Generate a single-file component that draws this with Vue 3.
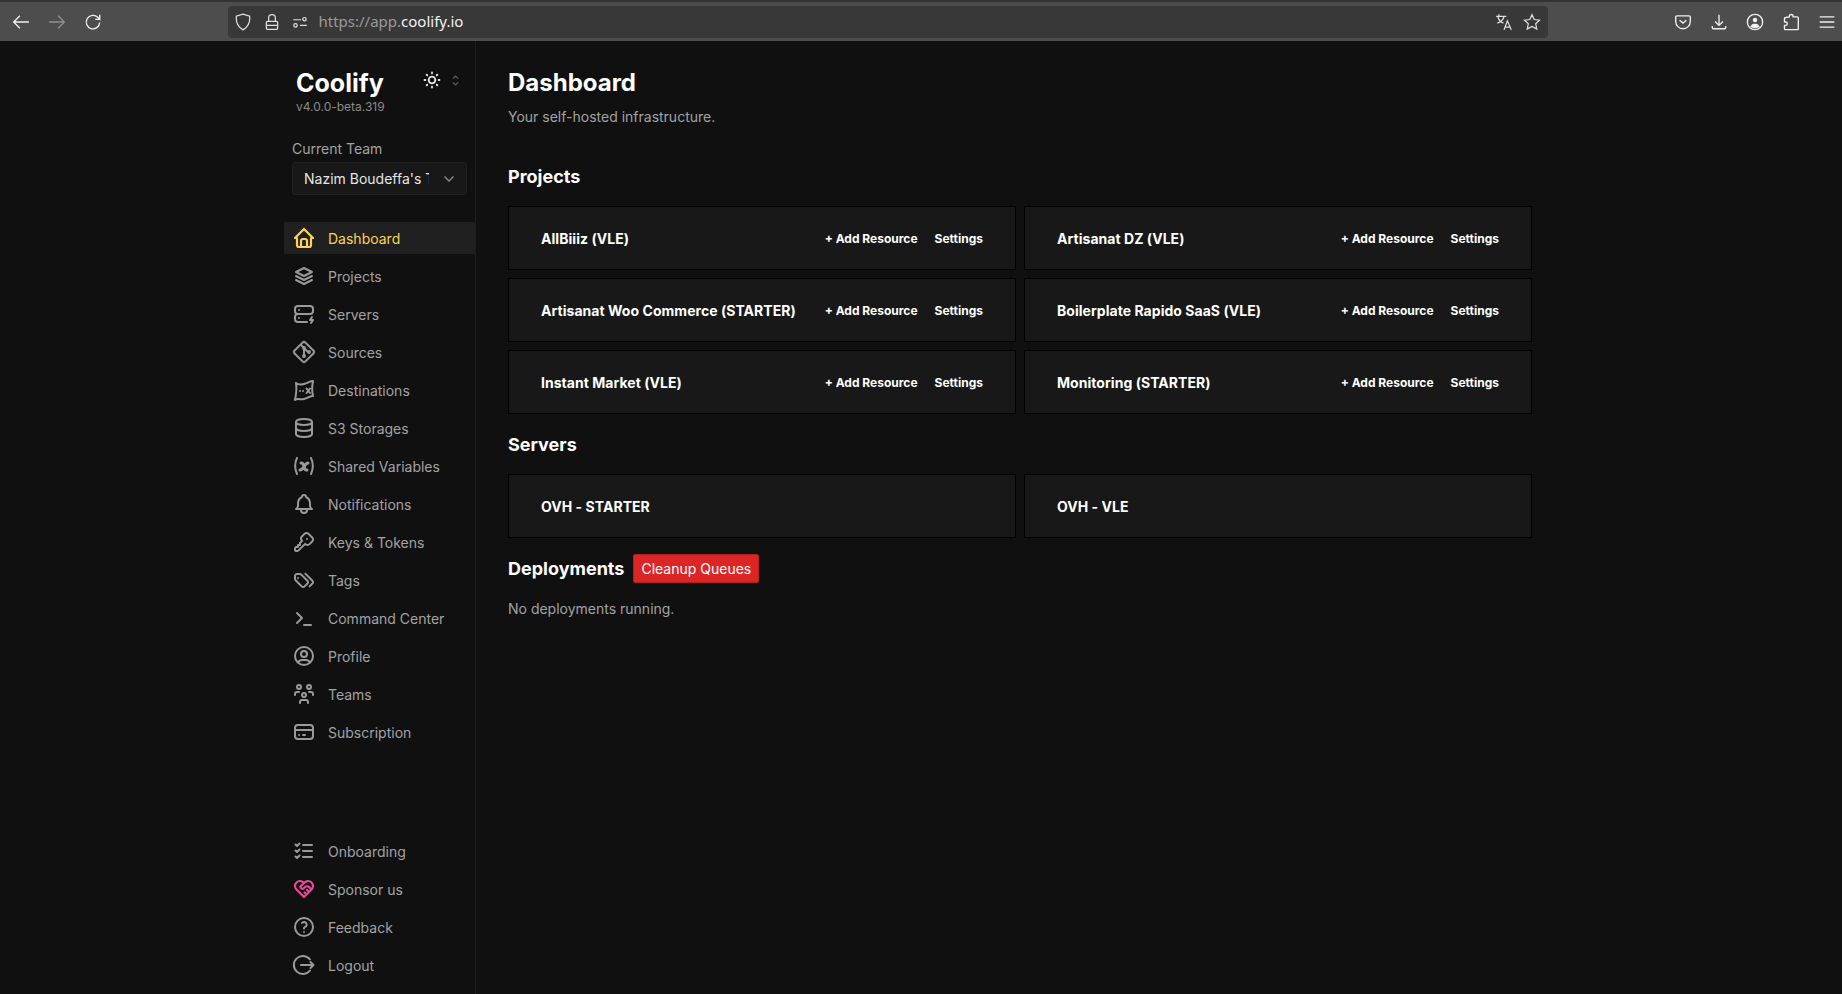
<script setup>
const topNav = [
  { label: 'Dashboard', active: true, d: 'M5 12l-2 0l9 -9l9 9l-2 0 M5 12v7a2 2 0 0 0 2 2h10a2 2 0 0 0 2 -2v-7 M9 21v-6a2 2 0 0 1 2 -2h2a2 2 0 0 1 2 2v6' },
  { label: 'Projects', d: 'M12 4l-8 4l8 4l8 -4l-8 -4 M4 12l8 4l8 -4 M4 16l8 4l8 -4' },
  { label: 'Servers', d: 'M3 7a3 3 0 0 1 3 -3h12a3 3 0 0 1 3 3v2a3 3 0 0 1 -3 3h-12a3 3 0 0 1 -3 -3z M15 20h-9a3 3 0 0 1 -3 -3v-2a3 3 0 0 1 3 -3h12 M7 8v.01 M7 16v.01 M20 15l-2 3h3l-2 3' },
  { label: 'Sources', d: 'M16 12a1 1 0 1 0 2 0a1 1 0 1 0 -2 0 M11 8a1 1 0 1 0 2 0a1 1 0 1 0 -2 0 M11 16a1 1 0 1 0 2 0a1 1 0 1 0 -2 0 M12 15v-6 M15 11l-2 -2 M11 7l-1.9 -1.9 M13.446 2.6l7.955 7.954a2.045 2.045 0 0 1 0 2.892l-7.955 7.955a2.045 2.045 0 0 1 -2.892 0l-7.955 -7.955a2.045 2.045 0 0 1 0 -2.892l7.955 -7.955a2.045 2.045 0 0 1 2.892 0z' },
  { label: 'Destinations', d: 'M4 5c2 2 4 2 8 1s6 -3 9 -3c-1 5 -1 11 0 15c-3 0 -5 2 -9 3s-6 -1 -9 1c1 -5 2 -11 1 -17z M8 13h.01 M11 13h.01 M14.500 10.500l3.500 4.500 M18 10.500l-3.500 4.500' },
  { label: 'S3 Storages', d: 'M4 6a8 3 0 1 0 16 0a8 3 0 1 0 -16 0 M4 6v6a8 3 0 0 0 16 0v-6 M4 12v6a8 3 0 0 0 16 0v-6' },
  { label: 'Shared Variables', d: 'M5 4c-2.5 5 -2.5 10 0 16m14 -16c2.5 5 2.5 10 0 16', bold: 'M9 9h1c1 0 1 1 2.016 3.527c.984 2.473 .984 3.473 1.984 3.473h1 M8 16c1.5 0 3 -2 4 -3.5s2.5 -3.5 4 -3.5' },
  { label: 'Notifications', d: 'M10 5a2 2 0 1 1 4 0a7 7 0 0 1 4 6v3a4 4 0 0 0 2 3h-16a4 4 0 0 0 2 -3v-3a7 7 0 0 1 4 -6 M9 17v1a3 3 0 0 0 6 0v-1' },
  { label: 'Keys & Tokens', d: 'M16.555 3.843l3.602 3.602a2.877 2.877 0 0 1 0 4.069l-2.643 2.643a2.877 2.877 0 0 1 -4.069 0l-.301 -.301l-6.558 6.558a2 2 0 0 1 -1.239 .578l-.175 .008h-1.172a1 1 0 0 1 -.993 -.883l-.007 -.117v-1.172a2 2 0 0 1 .467 -1.284l.119 -.13l.414 -.414h2v-2h2v-2l2.144 -2.144l-.301 -.301a2.877 2.877 0 0 1 0 -4.069l2.643 -2.643a2.877 2.877 0 0 1 4.069 0z M15 9h.01' },
  { label: 'Tags', d: 'M7.859 6h-2.834a2.025 2.025 0 0 0 -2.025 2.025v2.834c0 .537 .213 1.052 .593 1.432l6.116 6.116a2.025 2.025 0 0 0 2.864 0l2.834 -2.834a2.025 2.025 0 0 0 0 -2.864l-6.117 -6.116a2.025 2.025 0 0 0 -1.431 -.593z M17.573 18.407l2.834 -2.834a2.025 2.025 0 0 0 0 -2.864l-7.117 -7.116 M6 10h-.01' },
  { label: 'Command Center', d: 'M5 7l5 5l-5 5 M12 19l7 0' },
  { label: 'Profile', d: 'M3 12a9 9 0 1 0 18 0a9 9 0 1 0 -18 0 M9 10a3 3 0 1 0 6 0a3 3 0 1 0 -6 0 M6.168 18.849a4 4 0 0 1 3.832 -2.849h4a4 4 0 0 1 3.834 2.855' },
  { label: 'Teams', d: 'M10 13a2 2 0 1 0 4 0a2 2 0 0 0 -4 0 M8 21v-1a2 2 0 0 1 2 -2h4a2 2 0 0 1 2 2v1 M15 5a2 2 0 1 0 4 0a2 2 0 0 0 -4 0 M17 10h2a2 2 0 0 1 2 2v1 M5 5a2 2 0 1 0 4 0a2 2 0 0 0 -4 0 M3 13v-1a2 2 0 0 1 2 -2h2' },
  { label: 'Subscription', d: 'M3 8a3 3 0 0 1 3 -3h12a3 3 0 0 1 3 3v8a3 3 0 0 1 -3 3h-12a3 3 0 0 1 -3 -3z M3 10h18 M7 15h.01 M11 15h2' },
]
const bottomNav = [
  { label: 'Onboarding', d: 'M3.5 5.5l1.5 1.5l2.5 -2.5 M3.5 11.5l1.5 1.5l2.5 -2.5 M3.5 17.5l1.5 1.5l2.5 -2.5 M11 6l9 0 M11 12l9 0 M11 18l9 0' },
  { label: 'Sponsor us', pink: true, d: 'M19.5 12.572l-7.5 7.428l-7.5 -7.428a5 5 0 1 1 7.5 -6.566a5 5 0 1 1 7.5 6.572 M12 6l-3.293 3.293a1 1 0 0 0 0 1.414l.543 .543c.69 .69 1.81 .69 2.5 0l1 -1a3.182 3.182 0 0 1 4.5 0l2.25 2.25 M12.5 15.5l2 2 M15 13l2 2' },
  { label: 'Feedback', d: 'M3 12a9 9 0 1 0 18 0a9 9 0 1 0 -18 0 M12 17v.01 M12 13.5a1.5 1.5 0 0 1 1 -1.5a2.6 2.6 0 1 0 -3 -4' },
  { label: 'Logout', d: 'M18 6.5a9 9 0 1 0 0 11 M9 12h12.5 M18.5 9l3 3l-3 3' },
]
const projects = [
  'AllBiiiz (VLE)',
  'Artisanat DZ (VLE)',
  'Artisanat Woo Commerce (STARTER)',
  'Boilerplate Rapido SaaS (VLE)',
  'Instant Market (VLE)',
  'Monitoring (STARTER)',
]
const servers = ['OVH - STARTER', 'OVH - VLE']
</script>

<template>
  <div class="page">
    <header class="browser">
      <div class="nav-buttons">
        <svg class="tb" viewBox="0 0 16 16"><path d="M7 2.500L1.500 8L7 13.500M2 8h13" /></svg>
        <svg class="tb dim" viewBox="0 0 16 16"><path d="M9 2.500L14.500 8L9 13.500M14 8H1" /></svg>
        <svg class="tb" viewBox="0 0 16 16"><path d="M14 8.500a6 6 0 1 1-1.800-4.700L14 5.500V1.500M14 5.700H10" /></svg>
      </div>
      <div class="urlbar">
        <svg class="ub" viewBox="0 0 16 16"><path d="M8 1l6 1.800c.3 5-1 9.400-6 12.200C3 12.200 1.700 7.800 2 2.800z" /></svg>
        <svg class="ub" viewBox="0 0 16 16"><path d="M4 7.500h8a1 1 0 0 1 1 1v5a1 1 0 0 1-1 1H4a1 1 0 0 1-1-1v-5a1 1 0 0 1 1-1zM5 7.500V4.500a3 3 0 0 1 6 0v3M3 11h10" /></svg>
        <svg class="ub" viewBox="0 0 16 16"><path d="M2 6h7M13.500 5.500a1.500 1.500 0 1 0-3 0 1.500 1.500 0 0 0 3 0zM8 11h6M5.500 11a1.500 1.500 0 1 0-3 0 1.500 1.500 0 0 0 3 0z" /></svg>
        <span class="url"><span class="url-dim">https://app.</span>coolify.io</span>
        <span class="url-space"></span>
        <svg class="ub" viewBox="0 0 16 16"><path d="M1 3h9M3.500 1v2M2.500 3c.5 3 2.500 5 5 6M8 3c-.5 3-3 5-6 6M8 15l3-8 3.500 8M9 12.500h4.500" /></svg>
        <svg class="ub" viewBox="0 0 16 16"><path d="M8 1.500l2 4.300 4.700.6-3.400 3.200.9 4.700L8 12l-4.200 2.300.9-4.700L1.300 6.400 6 5.800z" /></svg>
      </div>
      <div class="tools">
        <svg class="tb" viewBox="0 0 16 16"><path d="M2.500 2.500h11a1 1 0 0 1 1 1v4a6.500 6.500 0 0 1-13 0v-4a1 1 0 0 1 1-1zM5 6.500l3 2.500 3-2.500" /></svg>
        <svg class="tb" viewBox="0 0 16 16"><path d="M8 1.500v9M4.500 7.500L8 11l3.500-3.500M2 11.500v1.500a1 1 0 0 0 1 1h10a1 1 0 0 0 1-1v-1.500" /></svg>
        <svg class="tb" viewBox="0 0 16 16"><circle cx="8" cy="8" r="6.800" /><circle cx="8" cy="6.300" r="2" class="fill" /><path class="fill" d="M3.800 12c1-2 2.500-2.500 4.200-2.500s3.200.5 4.200 2.500c-2.300 2-6.100 2-8.400 0z" /></svg>
        <svg class="tb" viewBox="0 0 16 16"><path d="M6.500 3.500V3a1.700 1.700 0 0 1 3.400 0v.5h3.600a1 1 0 0 1 1 1V14a.8.8 0 0 1-.8.8H3a.8.8 0 0 1-.8-.8v-3h1a1.500 1.500 0 0 0 0-3h-1V5a1 1 0 0 1 1-1z" /></svg>
        <svg class="tb" viewBox="0 0 16 16"><path d="M1.500 3.500h13M1.500 8h13M1.500 12.500h13" /></svg>
      </div>
    </header>

    <div class="shell">
      <aside class="sidebar">
        <div class="brand-row">
          <div>
            <div class="brand">Coolify</div>
            <div class="version">v4.0.0-beta.319</div>
          </div>
          <div class="theme">
            <svg class="sun" viewBox="0 0 24 24"><path d="M8 12a4 4 0 1 0 8 0a4 4 0 1 0 -8 0 M3 12h1 M12 3v1 M20 12h1 M12 20v1 M5.600 5.600l.7 .7 M18.400 5.600l-.7 .7 M17.700 17.700l.7 .7 M6.300 17.700l-.7 .7" /></svg>
            <svg class="updown" viewBox="0 0 10 16"><path d="M2 6l3-3 3 3M2 10l3 3 3-3" /></svg>
          </div>
        </div>
        <div class="team-label">Current Team</div>
        <div class="team-select">
          <span class="team-name">Nazim Boudeffa's Team</span>
          <svg class="caret" viewBox="0 0 12 12"><path d="M1.500 3.500L6 8l4.500-4.500" /></svg>
        </div>

        <nav class="menu">
          <a v-for="item in topNav" :key="item.label" class="row" :class="{ active: item.active }">
            <svg class="icon" viewBox="0 0 24 24"><path :d="item.d" /><path v-if="item.bold" class="bold" :d="item.bold" /></svg>
            <span>{{ item.label }}</span>
          </a>
        </nav>

        <nav class="menu bottom">
          <a v-for="item in bottomNav" :key="item.label" class="row">
            <svg class="icon" :class="{ pink: item.pink }" viewBox="0 0 24 24"><path :d="item.d" /></svg>
            <span>{{ item.label }}</span>
          </a>
        </nav>
      </aside>

      <main class="main">
        <h1>Dashboard</h1>
        <p class="sub">Your self-hosted infrastructure.</p>

        <h2 class="h-projects">Projects</h2>
        <div class="grid">
          <div v-for="p in projects" :key="p" class="card">
            <span class="card-title">{{ p }}</span>
            <span class="actions"><a>+ Add Resource</a><a>Settings</a></span>
          </div>
        </div>

        <h2 class="h-servers">Servers</h2>
        <div class="grid">
          <div v-for="s in servers" :key="s" class="card">
            <span class="card-title">{{ s }}</span>
          </div>
        </div>

        <div class="deploy-head">
          <h2>Deployments</h2>
          <button class="danger">Cleanup Queues</button>
        </div>
        <p class="none">No deployments running.</p>
      </main>
    </div>
  </div>
</template>

<style>
html, body { margin: 0; background: #101010; }
</style>

<style scoped>
.page {
  width: 1842px;
  height: 994px;
  overflow: hidden;
  background: #101010;
  display: flex;
  flex-direction: column;
  font-family: Inter, "Liberation Sans", sans-serif;
  color: #fff;
}
.browser {
  height: 41px;
  flex: none;
  box-sizing: border-box;
  border-top: 2px solid #333;
  background: #4d4d4d;
  display: flex;
  align-items: center;
}
.nav-buttons { display: flex; gap: 18px; width: 228px; padding-left: 12px; box-sizing: border-box; }
.tb { width: 18px; height: 18px; fill: none; stroke: #f0f0f0; stroke-width: 1.200; }
.tb.dim { stroke: #8e8e8e; }
.tb .fill { fill: #f0f0f0; stroke: none; }
.urlbar {
  width: 1320px;
  height: 32px;
  box-sizing: border-box;
  background: #383838;
  border-radius: 4px;
  display: flex;
  align-items: center;
  gap: 10.500px;
  padding: 0 7px 0 6px;
}
.ub { width: 18px; height: 18px; fill: none; stroke: #e0e0e0; stroke-width: 1.100; }
.url { font-family: "Noto Sans", sans-serif; font-size: 15px; line-height: 20px; color: #f2f2f2; margin: -2px 0 0 -1px; }
.url-dim { color: #9a9a9a; }
.url-space { flex: 1; }
.tools { display: flex; gap: 18px; margin-left: 126px; }
.shell { flex: 1; display: flex; min-height: 0; }
.sidebar {
  width: 476px;
  box-sizing: border-box;
  padding: 0 0 13px 284px;
  border-right: 1px solid #1c1c1c;
  display: flex;
  flex-direction: column;
}
.brand-row { display: flex; justify-content: space-between; padding: 28px 15px 0 12px; height: 70px; }
.brand { font-size: 25px; font-weight: 700; line-height: 28px; }
.version { font-size: 12px; color: #8a8a8a; line-height: 16px; margin-top: 2px; }
.theme { display: flex; align-items: center; height: 22px; gap: 9px; }
.sun { width: 20px; height: 20px; fill: none; stroke: #e8e8e8; stroke-width: 2.200; stroke-linecap: round; }
.updown { width: 9px; height: 15px; fill: none; stroke: #5e5e5e; stroke-width: 1.300; }
.team-label { font-size: 14px; color: #a3a3a3; line-height: 20px; padding-left: 8px; }
.team-select {
  margin: 3px 8px 0;
  width: 175px;
  height: 33px;
  box-sizing: border-box;
  background: #181818;
  border: 1px solid #202020;
  border-radius: 3px;
  display: flex;
  align-items: center;
  padding: 0 11px;
  justify-content: space-between;
}
.team-name { font-size: 14px; color: #e5e5e5; width: 125px; overflow: hidden; white-space: nowrap; }
.caret { width: 12px; height: 12px; fill: none; stroke: #8a8a8a; stroke-width: 1.400; }
.menu { display: flex; flex-direction: column; gap: 6px; margin-top: 27px; }
.menu.bottom { margin-top: auto; }
.row {
  height: 32px;
  display: flex;
  align-items: center;
  gap: 12px;
  padding-left: 8px;
  font-size: 14px;
  color: #a3a3a3;
}
.row.active { background: #202020; color: #fcd452; }
.icon { width: 24px; height: 24px; flex: none; fill: none; stroke: #9a9a9a; stroke-width: 2; stroke-linecap: round; stroke-linejoin: round; }
.icon .bold { stroke-width: 3; }
.row.active .icon { stroke: #fcd452; stroke-width: 2.200; }
.icon.pink { stroke: #ec4899; stroke-width: 2.200; }
.main { flex: 1; padding-left: 32px; }
h1 { margin: 28px 0 0; font-size: 24px; line-height: 28px; font-weight: 700; }
.sub { margin: 10px 0 0; font-size: 14px; line-height: 20px; color: #a3a3a3; }
h2 { margin: 0; font-size: 18px; line-height: 28px; font-weight: 700; }
.h-projects { margin-top: 36px; }
.h-servers { margin-top: 17px; }
.grid { width: 1024px; display: grid; grid-template-columns: 508px 508px; gap: 8px; margin-top: 15px; }
.card {
  height: 64px;
  box-sizing: border-box;
  background: #181818;
  border: 1px solid #000;
  padding: 0 32px;
  display: flex;
  align-items: center;
  justify-content: space-between;
}
.card-title { font-size: 14px; font-weight: 700; letter-spacing: .04px; }
.actions { display: flex; gap: 17px; font-size: 12px; font-weight: 700; }
.deploy-head { display: flex; align-items: center; gap: 9px; margin-top: 16px; }
.danger {
  height: 29px;
  padding: 0 7px;
  font: 14px Inter, sans-serif;
  color: #fff;
  background: #dc2626;
  border: 1px solid #b91c1c;
  border-radius: 2px;
}
.none { margin: 16px 0 0; font-size: 14px; line-height: 20px; color: #a3a3a3; }
</style>
